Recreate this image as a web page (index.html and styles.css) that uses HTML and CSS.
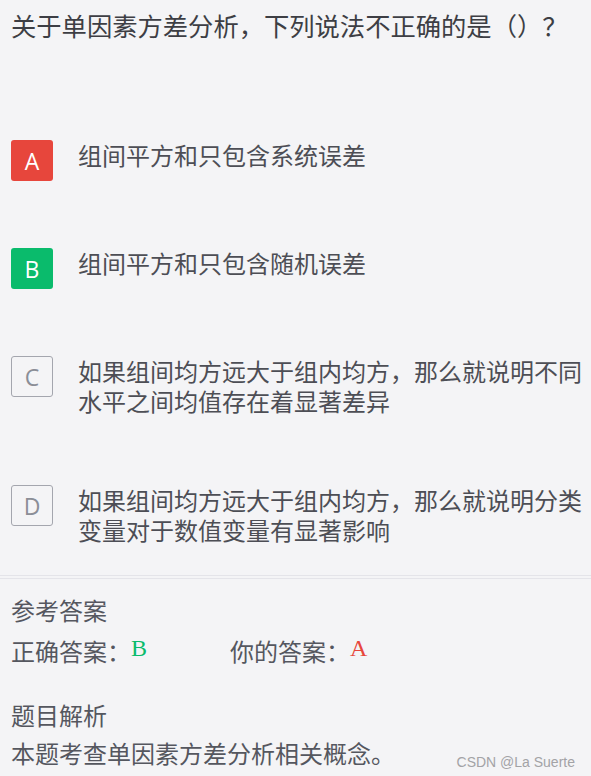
FILE: index.html
```html
<!DOCTYPE html>
<html lang="zh-CN">
<head>
<meta charset="utf-8">
<title>单因素方差分析</title>
<link rel="stylesheet" href="styles.css">
</head>
<body>
<div class="page">
  <div class="question">关于单因素方差分析，下列说法不正确的是（）？</div>
  <div class="options">
    <div class="option">
      <span class="badge badge-wrong">A</span>
      <div class="opt-text">组间平方和只包含系统误差</div>
    </div>
    <div class="option">
      <span class="badge badge-right">B</span>
      <div class="opt-text">组间平方和只包含随机误差</div>
    </div>
    <div class="option">
      <span class="badge badge-plain">C</span>
      <div class="opt-text">如果组间均方远大于组内均方，那么就说明不同水平之间均值存在着显著差异</div>
    </div>
    <div class="option">
      <span class="badge badge-plain">D</span>
      <div class="opt-text">如果组间均方远大于组内均方，那么就说明分类变量对于数值变量有显著影响</div>
    </div>
  </div>
  <div class="divider"></div>
  <div class="footer">
    <div class="section">
      <div class="line">参考答案</div>
      <div class="line answers">
        <div class="ans-item">正确答案：<span class="ans-letter ans-right">B</span></div>
        <div class="ans-item">你的答案：<span class="ans-letter ans-wrong">A</span></div>
      </div>
    </div>
    <div class="section section-gap">
      <div class="line">题目解析</div>
      <div class="line">本题考查单因素方差分析相关概念。</div>
    </div>
  </div>
  <div class="watermark">CSDN @La Suerte</div>
</div>
</body>
</html>
```
FILE: styles.css
```css
html, body {
  margin: 0;
  padding: 0;
  background: #f4f4f6;
}

body {
  font-family: "Noto Sans CJK SC", "Noto Sans", sans-serif;
  color: #4a4b52;
}

.page {
  position: relative;
  width: 591px;
  height: 776px;
  overflow: hidden;
}

.question {
  padding: 8px 0 0 11px;
  font-size: 25.3px;
  line-height: 35px;
  color: #3d3e44;
  white-space: nowrap;
}

.options {
  display: flex;
  flex-direction: column;
  gap: 67px;
  margin-top: 97px;
}

.option {
  display: flex;
  align-items: flex-start;
  padding: 0 8px 0 11px;
}

.badge {
  flex: 0 0 auto;
  box-sizing: border-box;
  width: 42px;
  height: 41px;
  border-radius: 3px;
  display: flex;
  align-items: center;
  justify-content: center;
  font-family: "Open Sans", "Liberation Sans", sans-serif;
  font-size: 23px;
  color: #ffffff;
}

.badge-wrong {
  background: #e7463c;
}

.badge-right {
  background: #0abb6c;
}

.badge-plain {
  border: 1px solid #a4a6ae;
  color: #8b8e97;
  background: transparent;
}

.opt-text {
  margin: 0 0 2px 25px;
  font-size: 24px;
  line-height: 30px;
  color: #4d4e55;
}

.divider {
  margin-top: 28px;
  height: 2px;
  border-top: 1px solid #e4e4e9;
  border-bottom: 1px solid #e4e4e9;
}

.footer {
  padding: 12px 0 0 11px;
  font-size: 24px;
  color: #55575f;
}

.line {
  line-height: 38px;
}

.section-gap {
  margin-top: 26px;
}

.answers {
  display: flex;
}

.ans-item {
  white-space: nowrap;
}

.ans-item:first-child {
  width: 219px;
}

.ans-letter {
  font-family: "Liberation Serif", serif;
  font-size: 24px;
  vertical-align: 5px;
}

.ans-right {
  color: #0abb6c;
}

.ans-wrong {
  color: #e7463c;
}

.watermark {
  position: absolute;
  right: 16px;
  bottom: 6px;
  font-family: "Liberation Sans", Arial, sans-serif;
  font-size: 14px;
  line-height: 16px;
  color: #a3a3a6;
}
```
